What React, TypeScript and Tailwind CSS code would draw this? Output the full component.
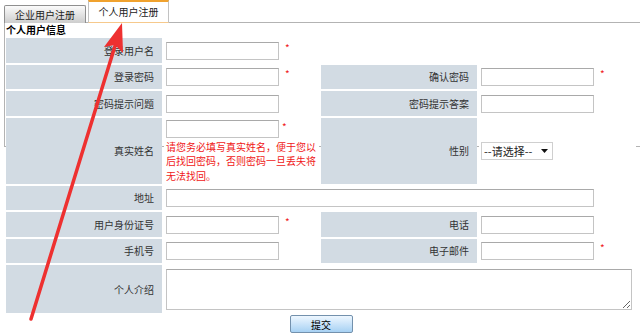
import React from 'react';

const font = "font-['Noto_Sans_CJK_SC','Noto_Sans',sans-serif]";

const Star = () => <span className="relative top-[2px] ml-[6px] align-top text-[10px] leading-[10px] text-[#f01818]">*</span>;

const Label = ({ children, tall }: { children: React.ReactNode; tall?: string }) => (
    <td className={`w-[156px] bg-[#d2dbe3] p-0 pr-[8px] text-right text-[10px] text-[#333] ${tall ?? 'h-[24.5px]'}`}>
        {children}
    </td>
);

const Input = ({ w = 'w-[113px]' }: { w?: string }) => (
    <input className={`${w} h-[18px] border border-[#c4c4c4] border-t-[#a9a9a9] bg-white px-1 text-[10px] outline-none align-middle`} />
);

const Cell = ({ children, colSpan }: { children?: React.ReactNode; colSpan?: number }) => (
    <td colSpan={colSpan} className="bg-white p-0 pl-[2px] align-middle text-[10px] leading-[18px]">
        {children}
    </td>
);

export default function App() {
    return (
        <div className={`relative w-[640px] h-[334px] overflow-hidden bg-white ${font}`}>
            {/* tabs */}
            <div className="flex items-end h-[23px] pl-[4px] relative z-10">
                <div className="h-[18px] w-[82px] border border-[#8f8f8f] border-b-0 rounded-t-[2px] bg-gradient-to-b from-[#fbfbfb] to-[#cdcdcd] text-center text-[10px] leading-[17px] text-[#222]">
                    企业用户注册
                </div>
                <div className="ml-[2px] h-[23px] w-[81px] border-t-2 border-t-[#f0a22e] border-x border-x-[#c2c2c2] border-b border-b-[#f6c98c] bg-white text-center text-[10px] leading-[19px] text-[#222]">
                    个人用户注册
                </div>
            </div>

            {/* panel */}
            <div className="ml-[4px] -mt-px h-[125px] border border-[#b3b3b3] border-r-0 w-[640px]">
                <div className="pl-[1px] pt-[1px] text-[10px] font-bold leading-[12px] text-black">个人用户信息</div>
                <table className="-ml-[1px] w-[634px] border-separate border-spacing-[2px] table-fixed">
                    <colgroup>
                        <col className="w-[156px]" />
                        <col className="w-[155px]" />
                        <col className="w-[156px]" />
                        <col className="w-[157px]" />
                    </colgroup>
                    <tbody>
                        <tr>
                            <Label>登录用户名</Label>
                            <Cell><Input /><Star /></Cell>
                            <td colSpan={2} className="bg-white p-0" />
                        </tr>
                        <tr>
                            <Label>登录密码</Label>
                            <Cell><Input /><Star /></Cell>
                            <Label>确认密码</Label>
                            <Cell><Input /><Star /></Cell>
                        </tr>
                        <tr>
                            <Label>密码提示问题</Label>
                            <Cell><Input /></Cell>
                            <Label>密码提示答案</Label>
                            <Cell><Input /></Cell>
                        </tr>
                        <tr>
                            <Label tall="h-[66px]">真实姓名</Label>
                            <td className="bg-white p-0 pl-[2px] align-top pt-[2px]">
                                <div className="flex items-start">
                                    <Input />
                                    <span className="ml-[3px] mt-[2px] text-[10px] leading-[10px] text-[#f01818]">*</span>
                                </div>
                                <p className="mt-[2px] text-[10px] leading-[14.5px] text-[#f01818] w-[152px]">
                                    请您务必填写真实姓名，便于您以后找回密码，否则密码一旦丢失将无法找回。
                                </p>
                            </td>
                            <Label tall="h-[66px]">性别</Label>
                            <Cell>
                                <div className="flex h-[18px] w-[72px] items-center justify-between border border-[#cfcfcf] bg-white pl-[2px] pr-[4px] text-[11px] text-[#222]">
                                    <span>--请选择--</span>
                                    <svg width="7" height="4" viewBox="0 0 7 4"><path d="M0 0h7L3.5 4z" fill="#111" /></svg>
                                </div>
                            </Cell>
                        </tr>
                        <tr>
                            <Label>地址</Label>
                            <Cell colSpan={3}><Input w="w-[428px]" /></Cell>
                        </tr>
                        <tr>
                            <Label>用户身份证号</Label>
                            <Cell><Input /><Star /></Cell>
                            <Label>电话</Label>
                            <Cell><Input /></Cell>
                        </tr>
                        <tr>
                            <Label>手机号</Label>
                            <Cell><Input /></Cell>
                            <Label>电子邮件</Label>
                            <Cell><Input /><Star /></Cell>
                        </tr>
                        <tr>
                            <Label tall="h-[48px]">个人介绍</Label>
                            <Cell colSpan={3}>
                                <textarea className="block w-[466px] h-[41px] border border-[#c4c4c4] border-t-[#a9a9a9] bg-white outline-none text-[10px]" />
                            </Cell>
                        </tr>
                        <tr>
                            <td colSpan={4} className="p-0">
                                <button className="mx-auto block h-[18px] w-[63px] rounded-[2px] border border-[#7391ad] bg-gradient-to-b from-[#eef7ff] to-[#a7d1f3] text-[10px] leading-[15px] text-black">
                                    提交
                                </button>
                            </td>
                        </tr>
                    </tbody>
                </table>
            </div>

            {/* red annotation arrow */}
            <svg className="pointer-events-none absolute left-0 top-0 z-20" width="640" height="334" viewBox="0 0 640 334">
                <line x1="31" y1="319" x2="115" y2="46" stroke="#ee3030" strokeWidth="3.5" strokeLinecap="round" />
                <polygon points="122,23 123,53 115,45 104,47" fill="#ee3030" />
            </svg>
        </div>
    );
}
